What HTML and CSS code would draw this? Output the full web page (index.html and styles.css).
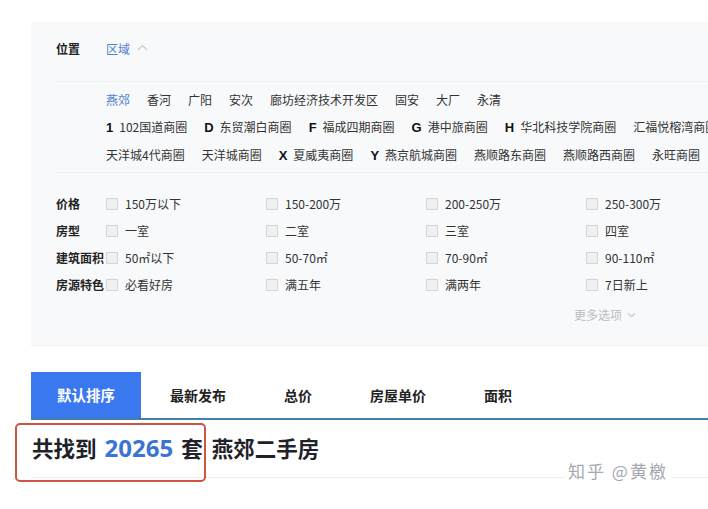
FILE: index.html
```html
<!DOCTYPE html>
<html lang="zh-CN">
<head>
<meta charset="utf-8">
<title>燕郊二手房</title>
<link rel="stylesheet" href="styles.css">
</head>
<body>
<div class="page">
  <section class="filter-panel">
    <div class="loc-row">
      <span class="row-label">位置</span>
      <span class="loc-tab">区域</span>
      <svg class="chev-up" width="11" height="7" viewBox="0 0 11 7"><path d="M1 6 L5.5 1.5 L10 6" fill="none" stroke="#c5c9d0" stroke-width="1.2"/></svg>
    </div>
    <div class="options">
      <div class="opt-row">
        <span class="opt active">燕郊</span>
        <span class="opt">香河</span>
        <span class="opt">广阳</span>
        <span class="opt">安次</span>
        <span class="opt">廊坊经济技术开发区</span>
        <span class="opt">固安</span>
        <span class="opt">大厂</span>
        <span class="opt">永清</span>
      </div>
      <div class="opt-row">
        <span class="opt"><b class="initial">1</b>102国道商圈</span>
        <span class="opt"><b class="initial">D</b>东贸潮白商圈</span>
        <span class="opt"><b class="initial">F</b>福成四期商圈</span>
        <span class="opt"><b class="initial">G</b>港中旅商圈</span>
        <span class="opt"><b class="initial">H</b>华北科技学院商圈</span>
        <span class="opt">汇福悦榕湾商圈</span>
      </div>
      <div class="opt-row">
        <span class="opt">天洋城4代商圈</span>
        <span class="opt">天洋城商圈</span>
        <span class="opt"><b class="initial">X</b>夏威夷商圈</span>
        <span class="opt"><b class="initial">Y</b>燕京航城商圈</span>
        <span class="opt">燕顺路东商圈</span>
        <span class="opt">燕顺路西商圈</span>
        <span class="opt">永旺商圈</span>
      </div>
    </div>
    <div class="checks">
      <div class="check-row">
        <span class="row-label">价格</span>
        <label class="check"><i class="box"></i>150万以下</label>
        <label class="check"><i class="box"></i>150-200万</label>
        <label class="check"><i class="box"></i>200-250万</label>
        <label class="check"><i class="box"></i>250-300万</label>
      </div>
      <div class="check-row">
        <span class="row-label">房型</span>
        <label class="check"><i class="box"></i>一室</label>
        <label class="check"><i class="box"></i>二室</label>
        <label class="check"><i class="box"></i>三室</label>
        <label class="check"><i class="box"></i>四室</label>
      </div>
      <div class="check-row">
        <span class="row-label">建筑面积</span>
        <label class="check"><i class="box"></i>50㎡以下</label>
        <label class="check"><i class="box"></i>50-70㎡</label>
        <label class="check"><i class="box"></i>70-90㎡</label>
        <label class="check"><i class="box"></i>90-110㎡</label>
      </div>
      <div class="check-row">
        <span class="row-label">房源特色</span>
        <label class="check"><i class="box"></i>必看好房</label>
        <label class="check"><i class="box"></i>满五年</label>
        <label class="check"><i class="box"></i>满两年</label>
        <label class="check"><i class="box"></i>7日新上</label>
      </div>
      <div class="more">更多选项
        <svg class="chev-down" width="9" height="6" viewBox="0 0 9 6"><path d="M1 1.5 L4.5 4.5 L8 1.5" fill="none" stroke="#c5c9d0" stroke-width="1.1"/></svg>
      </div>
    </div>
  </section>

  <nav class="tabs">
    <span class="tab active">默认排序</span>
    <span class="tab">最新发布</span>
    <span class="tab">总价</span>
    <span class="tab">房屋单价</span>
    <span class="tab">面积</span>
  </nav>

  <div class="result">
    <h1 class="result-title"><span>共找到</span><span class="count">20265</span><span class="unit">套</span><span>燕郊二手房</span></h1>
    <div class="highlight"></div>
    <div class="watermark">知乎 @黄檄</div>
  </div>
</div>
</body>
</html>
```

FILE: styles.css
```css
* { box-sizing: border-box; }
html, body { margin: 0; padding: 0; }
body {
  width: 708px;
  height: 509px;
  overflow: hidden;
  background: #ffffff;
  font-family: "Noto Sans CJK SC", "Noto Sans", sans-serif;
  color: #333;
}
.page {
  padding-top: 22px;
  width: 708px;
}
.filter-panel {
  margin-left: 31px;
  width: 760px;
  height: 324px;
  background: #f8f9fb;
  padding-left: 25px;
  border-bottom: 1px solid #f1f2f4;
}
.row-label {
  font-size: 12px;
  font-weight: 700;
  color: #222;
  width: 50px;
  flex: none;
  white-space: nowrap;
}
.loc-row {
  display: flex;
  align-items: center;
  height: 59px;
  padding-bottom: 6px;
  font-size: 12px;
  line-height: 20px;
}
.loc-tab { color: #4f7fcf; }
.chev-up { margin-left: 7px; margin-top: -2px; }
.options {
  border-top: 1px solid #edeff2;
  border-bottom: 1px solid #edeff2;
  padding: 4px 0 6px 50px;
  height: 92px;
}
.opt-row {
  display: flex;
  gap: 17px;
  font-size: 12px;
  line-height: 27px;
  white-space: nowrap;
}
.opt { color: #333; }
.opt.active { color: #4f7fcf; }
.initial {
  font-weight: 700;
  color: #111;
  font-family: "Liberation Sans", "Noto Sans", sans-serif;
  font-size: 13px;
  margin-right: 6px;
}
.checks {
  padding-top: 17px;
}
.check-row {
  display: flex;
  align-items: center;
  height: 27px;
  font-size: 12px;
}
.check {
  width: 160px;
  display: flex;
  align-items: center;
  color: #333;
  white-space: nowrap;
}
.box {
  width: 12px;
  height: 12px;
  border: 1px solid #d3d5d9;
  background: #eff0f2;
  margin-right: 7px;
  flex: none;
}
.more {
  margin-left: 518px;
  margin-top: 7px;
  font-size: 12px;
  line-height: 20px;
  color: #b9bdc4;
  display: flex;
  align-items: center;
  gap: 5px;
}
.tabs {
  margin-top: 26px;
  margin-left: 31px;
  display: flex;
  border-bottom: 2px solid #4180aa;
  height: 48px;
}
.tab {
  height: 46px;
  line-height: 46px;
  padding: 0 29px;
  font-size: 14px;
  font-weight: 700;
  color: #222;
  white-space: nowrap;
}
.tab.active {
  background: #3a78ef;
  color: #fff;
  width: 110px;
  padding: 0;
  text-align: center;
  font-size: 14.5px;
}
.result {
  position: relative;
  margin-left: 31px;
  padding: 13px 0 14px 1px;
  border-bottom: 1px solid #ededed;
}
.result-title {
  margin: 0;
  font-size: 21.5px;
  line-height: 30px;
  font-weight: 700;
  color: #1f2229;
  white-space: nowrap;
}
.count {
  color: #3a74d4;
  font-family: "Noto Sans", sans-serif;
  font-size: 24px;
  margin: 0 8px;
}
.unit { margin-right: 9px; }
.highlight {
  position: absolute;
  left: -16px;
  top: 3px;
  width: 191px;
  height: 59px;
  border: 2px solid #cf5442;
  border-radius: 5px;
}
.watermark {
  position: absolute;
  left: 533px;
  top: 40px;
  font-size: 17px;
  line-height: 22px;
  letter-spacing: 2px;
  color: #a4a8b0;
  background: #fff;
  padding: 0 4px;
}
```
